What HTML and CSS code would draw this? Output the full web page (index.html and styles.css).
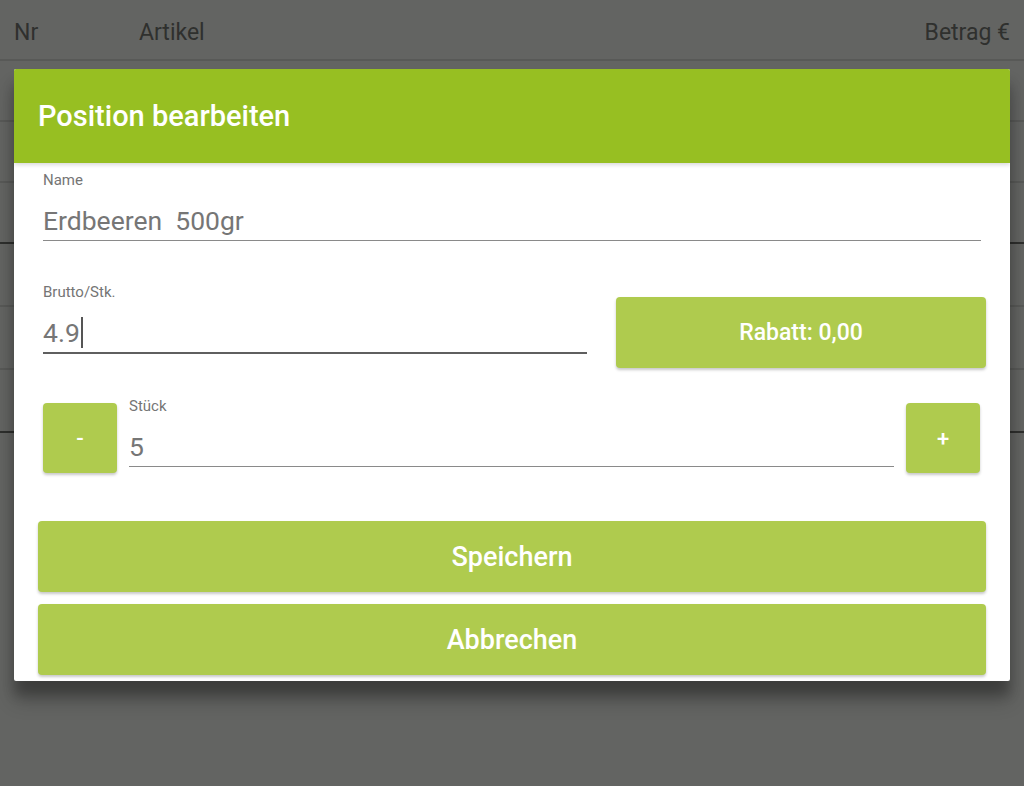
FILE: index.html
```html
<!DOCTYPE html>
<html lang="de">
<head>
    <meta charset="UTF-8">
    <meta name="viewport" content="width=device-width, initial-scale=1.0">
    <title>Position bearbeiten</title>
    <link rel="stylesheet" href="styles.css">
</head>
<body>

    <div class="page">
        <div class="table-head">
            <span class="col-nr">Nr</span>
            <span class="col-artikel">Artikel</span>
            <span class="col-betrag">Betrag €</span>
        </div>
        <div class="table-row"></div>
        <div class="table-row"></div>
        <div class="table-row dark"></div>
        <div class="table-row wide"></div>
        <div class="table-row wide"></div>
        <div class="table-row wide dark"></div>
    </div>

    <div class="dialog">
        <div class="dialog-header">Position bearbeiten</div>
        <div class="dialog-body">
            <div class="field name-field">
                <label for="name">Name</label>
                <input id="name" type="text" value="Erdbeeren  500gr">
            </div>

            <div class="price-row">
                <div class="field price-field focused">
                    <label for="brutto">Brutto/Stk.</label>
                    <div class="fake-input">4.9<span class="caret"></span></div>
                </div>
                <button class="btn btn-rabatt">Rabatt: 0,00</button>
            </div>

            <div class="qty-row">
                <button class="btn btn-step">-</button>
                <div class="field qty-field">
                    <label for="stueck">Stück</label>
                    <input id="stueck" type="text" value="5">
                </div>
                <button class="btn btn-step">+</button>
            </div>

            <div class="actions">
                <button class="btn btn-wide">Speichern</button>
                <button class="btn btn-wide">Abbrechen</button>
            </div>
        </div>
    </div>

</body>
</html>
```

FILE: styles.css
```css
body {
    font-family: Roboto, "Noto Sans", Arial, sans-serif;
    margin: 0;
    padding: 0;
    background-color: #636462;
    height: 786px;
    overflow: hidden;
}
.page {
    color: #2f302e;
}
.table-head {
    display: flex;
    align-items: center;
    box-sizing: border-box;
    height: 61px;
    padding: 5px 14px 0;
    font-size: 23px;
    border-bottom: 2px solid #585957;
}
.col-nr {
    width: 125px;
}
.col-artikel {
    flex: 1;
}
.table-row {
    height: 59px;
    border-bottom: 2px solid #585957;
}
.table-row.wide {
    height: 61px;
}
.table-row.dark {
    border-bottom-color: #2e2f2d;
}
.dialog {
    position: absolute;
    left: 14px;
    top: 69px;
    width: 996px;
    height: 612px;
    background-color: #fff;
    border-radius: 2px;
    box-shadow: 0 19px 20px rgba(0, 0, 0, 0.24), 0 14px 12px rgba(0, 0, 0, 0.2);
    overflow: hidden;
}
.dialog-header {
    height: 94px;
    display: flex;
    align-items: center;
    padding: 0 24px;
    background-color: #97bf22;
    color: #fff;
    font-size: 29px;
    font-weight: 500;
    box-shadow: 0 2px 4px rgba(0, 0, 0, 0.15);
    position: relative;
}
.dialog-body {
    padding: 7px 24px 0;
}
.field {
    display: flex;
    flex-direction: column;
}
.field label {
    font-size: 15px;
    line-height: 20px;
    height: 20px;
    color: #757575;
}
.field input,
.fake-input {
    font-family: inherit;
    font-size: 26.5px;
    line-height: 31px;
    color: #767676;
    border: none;
    border-bottom: 1px solid #8a8a8a;
    height: 51px;
    outline: none;
    background: none;
    box-sizing: border-box;
}
.field input {
    padding: 11px 0 0;
}
.fake-input {
    display: flex;
    align-items: flex-end;
    padding: 0 0 4px;
}
.name-field {
    margin: 0 5px;
}
.price-row {
    display: flex;
    align-items: flex-start;
    margin-top: 41px;
}
.price-field {
    width: 544px;
    margin-left: 5px;
}
.focused .fake-input {
    border-bottom: 2px solid #5f5f5f;
    height: 52px;
}
.caret {
    display: inline-block;
    width: 2px;
    height: 31px;
    margin-left: 1px;
    background-color: #555;
}
.btn {
    font-family: inherit;
    border: none;
    border-radius: 4px;
    background-color: #afcb4e;
    color: #fff;
    font-weight: 500;
    box-shadow: 0 2px 3px rgba(0, 0, 0, 0.22);
    cursor: pointer;
}
.btn-rabatt {
    margin: 15px 0 0 auto;
    width: 370px;
    height: 71px;
    font-size: 23px;
}
.qty-row {
    display: flex;
    align-items: flex-start;
    margin-top: 28px;
    padding: 0 6px 0 5px;
}
.btn-step {
    width: 74px;
    height: 70px;
    margin-top: 7px;
    font-size: 22px;
    flex-shrink: 0;
}
.qty-field {
    flex: 1;
    margin: 0 12px;
}
.actions {
    display: flex;
    flex-direction: column;
    gap: 12px;
    margin-top: 48px;
}
.btn-wide {
    width: 100%;
    height: 71px;
    font-size: 27px;
}
```
